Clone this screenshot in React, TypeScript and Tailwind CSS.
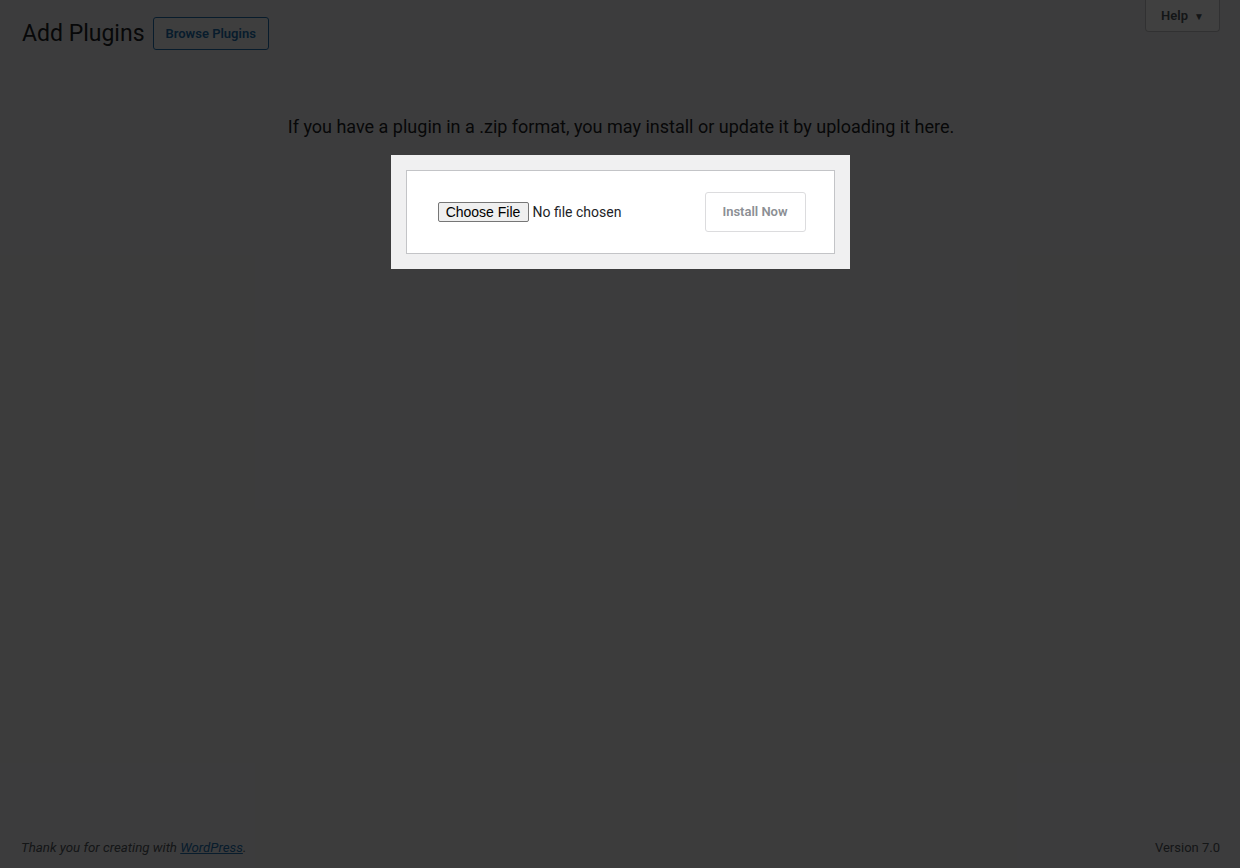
import React from "react";

export default function App() {
  return (
    <div className="relative flex h-[868px] flex-col overflow-hidden bg-[#f0f0f1] font-['Roboto',sans-serif] text-[#1d2327]">
      {/* Page header */}
      <div className="flex items-start justify-between">
        <div className="flex items-center gap-[8px] pl-[22px] pt-[17px]">
          <h1 className="pt-[1px] text-[23px] font-normal leading-[30px]">Add Plugins</h1>
          <button className="h-[33px] rounded-[3px] border border-[#2271b1] bg-[#f6f7f7] px-[12px] text-[13px] font-semibold text-[#2271b1]">
            Browse Plugins
          </button>
        </div>
        <div className="mr-[20px] flex h-[32px] w-[75px] items-center justify-center gap-[6px] rounded-b-[4px] border border-t-0 border-[#c3c4c7] bg-white pt-[1px] text-[13px] font-semibold text-[#50575e]">
          <span>Help</span>
          <span className="text-[10px]">▼</span>
        </div>
      </div>

      {/* Upload section */}
      <p className="mt-[65px] pl-[2px] text-center text-[18px] leading-[24px]">
        If you have a plugin in a .zip format, you may install or update it by uploading it here.
      </p>
      <div className="relative z-10 mx-auto mt-[16px] w-[459px] bg-[#f0f0f1] p-[15px]">
        <div className="flex items-center justify-between border border-[#c3c4c7] bg-white py-[21px] pl-[31px] pr-[28px]">
          <label className="flex cursor-pointer items-center font-['Liberation_Sans',Arial,sans-serif] text-[14px] text-black">
            <input type="file" className="hidden" />
            <span className="flex h-[20px] w-[91px] items-center justify-center rounded-[2px] border border-[#767676] bg-[#efefef]">
              Choose File
            </span>
            <span className="ml-[4px] font-['Roboto',sans-serif] text-[14px] text-[#1d2327]">No file chosen</span>
          </label>
          <button className="h-[40px] w-[101px] rounded-[3px] border border-[#dcdcde] bg-white text-[13px] font-semibold text-[#8c8f94]">
            Install Now
          </button>
        </div>
      </div>

      {/* Footer */}
      <div className="mt-auto flex items-center justify-between px-[20px] pb-[10px] text-[13px] text-[#50575e]">
        <p className="pl-[1px] text-[13.3px] italic">
          Thank you for creating with{" "}
          <a href="#" className="text-[#2271b1] underline">
            WordPress
          </a>
          .
        </p>
        <p>Version 7.0</p>
      </div>

      {/* Dimming layer behind the highlighted upload box */}
      <div className="pointer-events-none absolute inset-0 z-[5] bg-black/75" />
    </div>
  );
}
